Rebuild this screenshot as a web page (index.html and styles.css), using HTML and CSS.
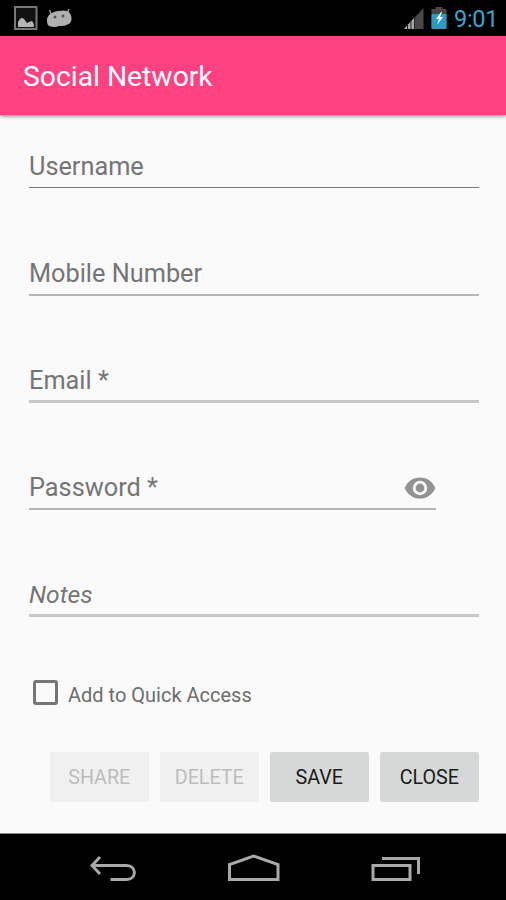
FILE: index.html
```html
<!DOCTYPE html>
<html lang="en">
<head>
<meta charset="utf-8">
<title>Social Network</title>
<link rel="stylesheet" href="styles.css">
</head>
<body>
<div class="status">
  <svg class="status-left" width="64" height="36" viewBox="0 0 64 36">
    <rect x="1" y="7" width="21.500" height="22" fill="#111" stroke="#777" stroke-width="2"/>
    <path d="M4 27v-5l2-3q2-2 4 0l3 4 2-1 3-1q2 2 2 6z" fill="#b5b5b5"/>
    <path d="M35.500 10l2 5M55 9l-2 5" stroke="#aaa" stroke-width="1.300"/>
    <path d="M37 13.500q4-3 8-2.500q4-1 8 0q4.500 2 4.500 7.500q0 5-4 6q-3 2-8 1.500q-5 1.500-9 0.500q-4-1-3.500-6.500q0-4 4-6.500z" fill="#b0b0b0"/>
    <circle cx="41" cy="17" r="1.500" fill="#555"/><circle cx="49" cy="16" r="1.500" fill="#555"/>
  </svg>
  <svg class="status-right" width="46" height="36" viewBox="0 0 46 36">
    <path d="M1 29L20.500 8v21z" fill="#484848"/>
    <path d="M1 29l10-11v11z" fill="#aaa"/>
    <path d="M4.500 24v5M8 20v9M11.500 18v11" stroke="#222" stroke-width="1"/>
    <path d="M28.500 28V9h4V7h7v2h4v19z" fill="#484848"/>
    <path d="M28.500 14h15v15h-15z" fill="#2d9ac2"/>
    <path d="M38 12l-5 7h3l-2 6 6-8h-3l2-5z" fill="#fff"/>
  </svg>
  <span class="clock">9:01</span>
</div>
<header class="appbar"><h1>Social Network</h1></header>
<main class="form">
  <div class="field field-username"><span>Username</span></div>
  <div class="field"><span>Mobile Number</span></div>
  <div class="field field-email"><span>Email *</span></div>
  <div class="field field-password"><span>Password *</span>
    <svg width="32" height="32" viewBox="0 0 32 32">
      <path fill="#929292" fill-rule="evenodd" d="M.7 16C3.500 9.300 9 5.400 16 5.400S28.500 9.300 31.300 16C28.500 22.700 23 26.600 16 26.600S3.500 22.700.7 16zM16 8.800a7.200 7.200 0 1 0 0 14.400a7.200 7.200 0 0 0 0-14.400zm0 2.800a4.400 4.400 0 1 1 0 8.800a4.400 4.400 0 0 1 0-8.800z"/>
    </svg>
  </div>
  <div class="field field-notes"><span>Notes</span></div>
  <div class="check"><i class="box"></i><span>Add to Quick Access</span></div>
  <div class="actions">
    <div class="btn disabled"><span>SHARE</span></div>
    <div class="btn disabled"><span>DELETE</span></div>
    <div class="btn"><span>SAVE</span></div>
    <div class="btn"><span>CLOSE</span></div>
  </div>
</main>
<nav class="navbar">
  <svg width="506" height="66" viewBox="0 0 506 66" fill="none" stroke="#a9a9a9" stroke-width="3">
    <path d="M100 23l-8 8.500 8 8.500M92 31.500h34.500c10.500 0 10.500 14 0 14h-16"/>
    <path d="M229.500 45.500V30.500L253.500 22l24.500 8.500v15z"/>
    <path d="M373 31.500h37v14h-37zM382 24.500h36.500V40"/>
  </svg>
</nav>
</body>
</html>
```
FILE: styles.css
```css
* { box-sizing: border-box; }
body {
  margin: 0;
  width: 506px;
  height: 900px;
  display: flex;
  flex-direction: column;
  overflow: hidden;
  background: #fafafa;
  font-family: Roboto, "Liberation Sans", sans-serif;
}
svg { display: block; flex: none; }
.status {
  height: 36px;
  flex: none;
  display: flex;
  align-items: center;
  background: #000;
  padding: 0 9px 0 14px;
}
.status-right { margin-left: auto; }
.clock {
  width: 43px;
  margin-left: 5px;
  font-size: 23.500px;
  line-height: 36px;
  padding-top: 1px;
  letter-spacing: -0.300px;
  color: #3ba4cd;
  white-space: nowrap;
}
.appbar {
  height: 79px;
  flex: none;
  display: flex;
  align-items: center;
  padding: 2px 0 0 23px;
  background: #ff4081;
  box-shadow: 0 1px 4px rgba(0, 0, 0, 0.500);
}
h1 {
  margin: 0;
  font-size: 28.300px;
  font-weight: 400;
  line-height: 36px;
  color: #fff;
}
.form {
  height: 718px;
  flex: none;
  padding: 35px 27px 0 29px;
  display: flex;
  flex-direction: column;
}
.field {
  height: 39px;
  margin-bottom: 68px;
  flex: none;
  display: flex;
  justify-content: space-between;
  border-bottom: 2px solid #b5b5b5;
  font-size: 25.300px;
  line-height: 34px;
  color: #757575;
  white-space: nowrap;
}
.field-username {
  height: 38px;
  margin-bottom: 69px;
  border-bottom: 1px solid #777;
}
.field-email { border-bottom: 3px solid #c8c8c8; }
.field-password { width: 407px; }
.field-password svg { margin-top: 1px; }
.field-notes {
  margin-bottom: 60px;
  border-bottom: 3px solid #c9c9c9;
  font-size: 24.700px;
  font-style: italic;
}
.check {
  height: 30px;
  display: flex;
  align-items: center;
  padding-left: 4px;
  color: #6d6d6d;
  font-size: 20px;
}
.box {
  width: 25px;
  height: 25px;
  border: 3px solid #757575;
  border-radius: 3px;
}
.check span { margin: 5px 0 0 10px; white-space: nowrap; }
.actions {
  display: flex;
  gap: 11.500px;
  justify-content: flex-end;
  margin: 44.500px 0.500px 0 0;
}
.btn {
  width: 98.500px;
  height: 50px;
  border-radius: 2px;
  background: #d6d7d7;
  display: flex;
  align-items: center;
  justify-content: center;
  font-size: 19.700px;
  color: #1b1b1b;
}
.btn span { padding-top: 2px; }
.disabled { background: #f0f0f0; color: #bdbdbd; }
.navbar {
  height: 67px;
  flex: none;
  background: #000;
  border-top: 1px solid #888;
}
```
